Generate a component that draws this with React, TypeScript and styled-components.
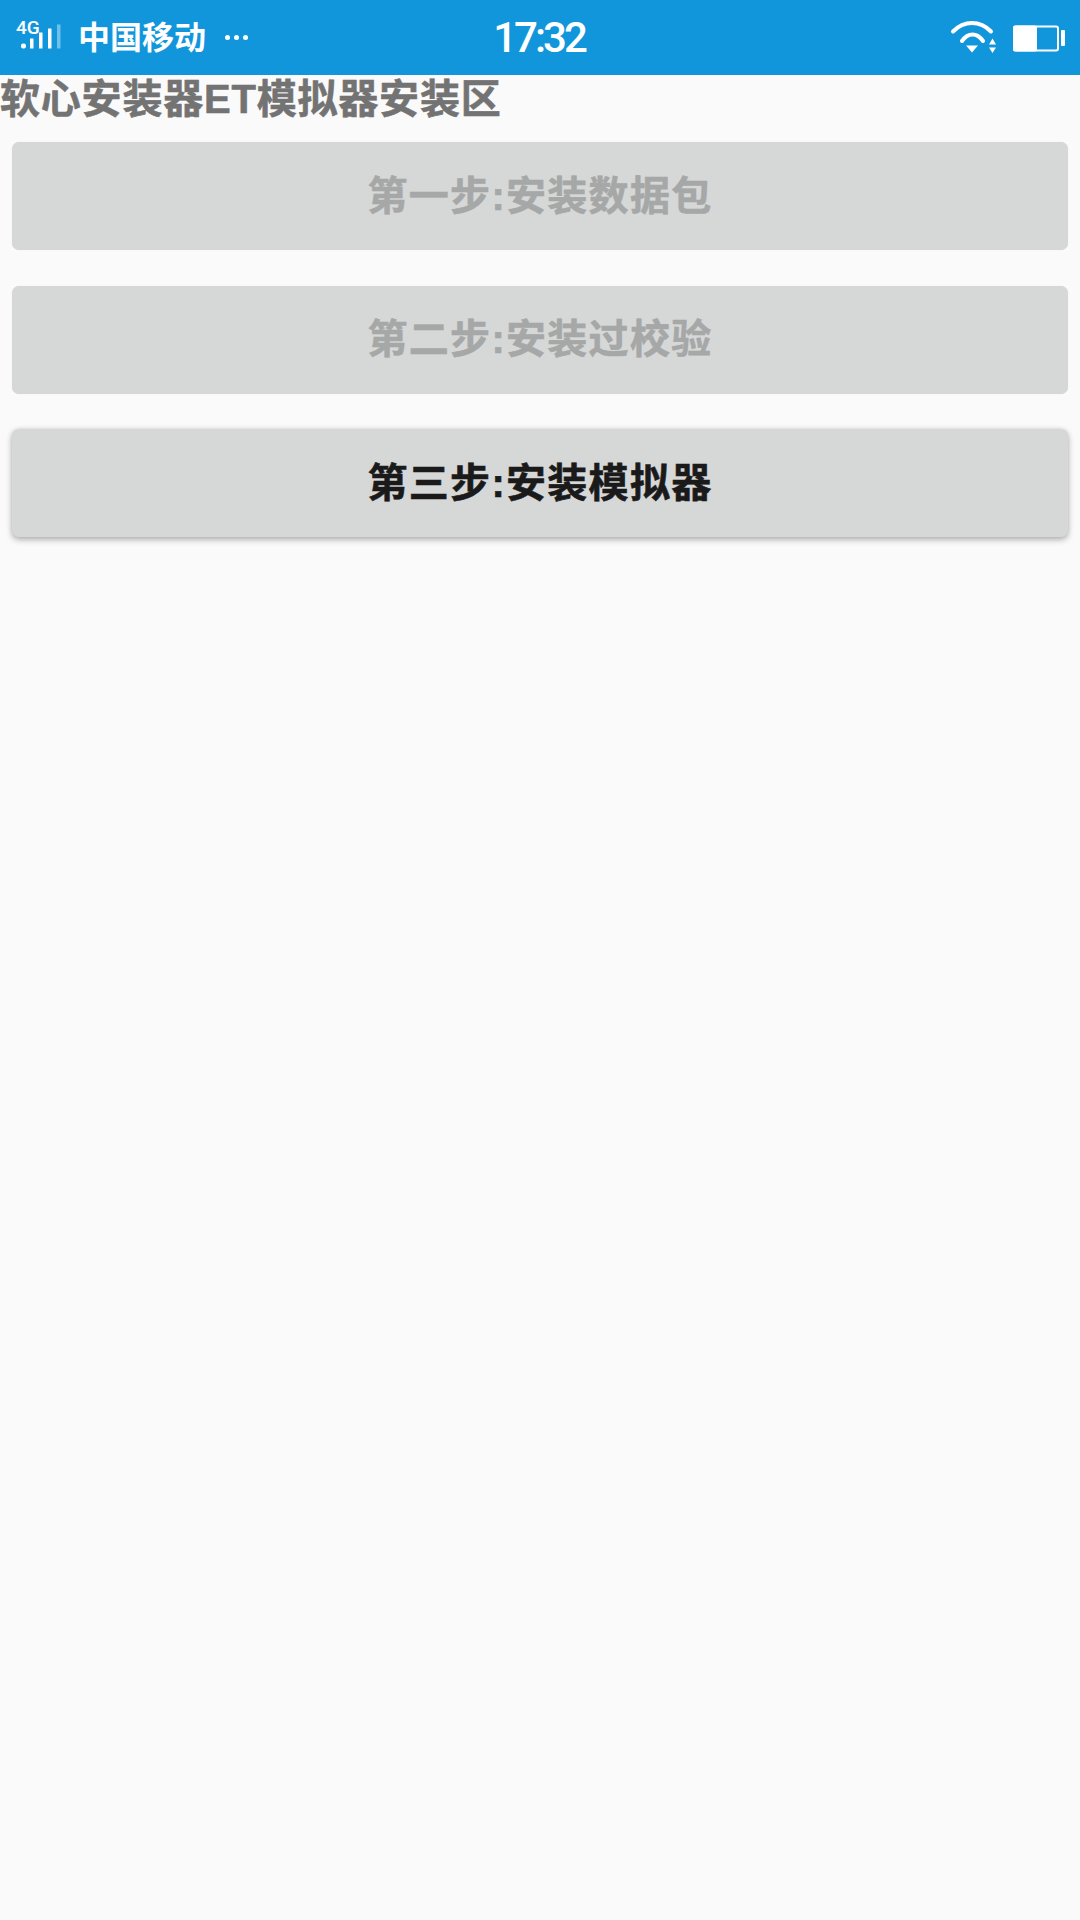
import React from "react";
import styled, { createGlobalStyle } from "styled-components";

const GlobalStyle = createGlobalStyle`
  html, body {
    margin: 0;
    padding: 0;
    background: #fafafa;
  }
  body {
    font-family: "Liberation Sans", "Noto Sans CJK SC", sans-serif;
  }
`;

const Page = styled.div`
  width: 1080px;
  height: 1920px;
  background: #fafafa;
  overflow: hidden;
`;

const StatusBar = styled.div`
  height: 75px;
  background: #1296db;
  color: #fff;
  display: grid;
  grid-template-columns: 1fr auto 1fr;
  align-items: center;
`;

const StatusLeft = styled.div`
  display: flex;
  align-items: center;
  padding-left: 16px;
`;

const Carrier = styled.span`
  font-size: 32px;
  font-weight: 700;
  margin-left: 16px;
  line-height: 40px;
`;

const Dots = styled.span`
  display: flex;
  gap: 4px;
  margin-left: 19px;
`;

const Dot = styled.i`
  width: 5px;
  height: 5px;
  border-radius: 50%;
  background: #fff;
`;

const Clock = styled.span`
  font-family: Roboto, "Liberation Sans", sans-serif;
  font-size: 42px;
  font-weight: 500;
  letter-spacing: -3px;
  line-height: 75px;
  position: relative;
  left: -1px;
`;

const StatusRight = styled.div`
  display: flex;
  justify-content: flex-end;
  align-items: center;
  gap: 17px;
  padding-right: 15px;
`;

const Title = styled.h1`
  margin: 0;
  font-size: 40px;
  line-height: 48px;
  font-weight: 700;
  letter-spacing: 0.8px;
  color: #737373;
  -webkit-text-stroke: 0.6px #737373;
`;

const ButtonList = styled.div`
  display: flex;
  flex-direction: column;
  gap: 35.5px;
  padding: 19px 12px 0;
`;

const StepButton = styled.button<{ $enabled?: boolean }>`
  height: 108px;
  border: 0;
  border-radius: 7px;
  background: #d6d7d7;
  padding: 0 0 7px;
  font-family: inherit;
  font-size: 40px;
  font-weight: 700;
  letter-spacing: 1.3px;
  color: ${(p) => (p.$enabled ? "#1a1a1a" : "#a6a7a7")};
  -webkit-text-stroke: 0.6px ${(p) => (p.$enabled ? "#1a1a1a" : "#a6a7a7")};
  box-shadow: ${(p) =>
    p.$enabled
      ? "0 3px 6px rgba(0,0,0,0.26), 0 0 5px rgba(0,0,0,0.12)"
      : "0 0 1px rgba(0,0,0,0.1)"};
`;

const SignalIcon = () => (
  <svg width="46" height="44" viewBox="0 0 46 44">
    <text x="0" y="17.5" fontSize="19" fontWeight="500" fill="#fff" fontFamily="Roboto, sans-serif">
      4G
    </text>
    <rect x="5" y="27.5" width="5" height="5" rx="2" fill="#fff" />
    <rect x="14" y="22.5" width="3.5" height="10" fill="#fff" />
    <rect x="23" y="16.5" width="3.5" height="16" fill="#fff" />
    <rect x="32" y="12.5" width="3.5" height="20" fill="#fff" />
    <rect x="41" y="8.5" width="3.5" height="24" fill="#fff" opacity="0.4" />
  </svg>
);

const WifiIcon = () => (
  <svg width="46" height="36" viewBox="0 0 46 36" fill="none">
    <path d="M3 11.5 C14 0.2 30 0.2 41 11.5" stroke="#fff" strokeWidth="4" strokeLinecap="round" />
    <path d="M12 21 C18 12.3 27 12.3 33 21" stroke="#fff" strokeWidth="4" strokeLinecap="round" />
    <path d="M16 25.5 H28 L22 32.5 Z" fill="#fff" />
    <path d="M39 24.5 L42.5 18.5 L46 24.5 Z M39 27.5 H46 L42.5 33 Z" fill="#fff" />
  </svg>
);

const BatteryIcon = () => (
  <svg width="52" height="28" viewBox="0 0 52 28">
    <rect x="1" y="2.5" width="44" height="24" rx="2" fill="none" stroke="#fff" strokeWidth="2" />
    <rect x="0" y="1.5" width="24" height="26" rx="2" fill="#fff" />
    <rect x="48" y="6" width="4" height="16" rx="1" fill="#fff" />
  </svg>
);

const steps = [
  { label: "第一步:安装数据包", enabled: false },
  { label: "第二步:安装过校验", enabled: false },
  { label: "第三步:安装模拟器", enabled: true },
];

export default function App() {
  return (
    <Page>
      <GlobalStyle />
      <StatusBar>
        <StatusLeft>
          <SignalIcon />
          <Carrier>中国移动</Carrier>
          <Dots>
            <Dot />
            <Dot />
            <Dot />
          </Dots>
        </StatusLeft>
        <Clock>17:32</Clock>
        <StatusRight>
          <WifiIcon />
          <BatteryIcon />
        </StatusRight>
      </StatusBar>
      <Title>软心安装器ET模拟器安装区</Title>
      <ButtonList>
        {steps.map((s) => (
          <StepButton key={s.label} $enabled={s.enabled}>
            {s.label}
          </StepButton>
        ))}
      </ButtonList>
    </Page>
  );
}
